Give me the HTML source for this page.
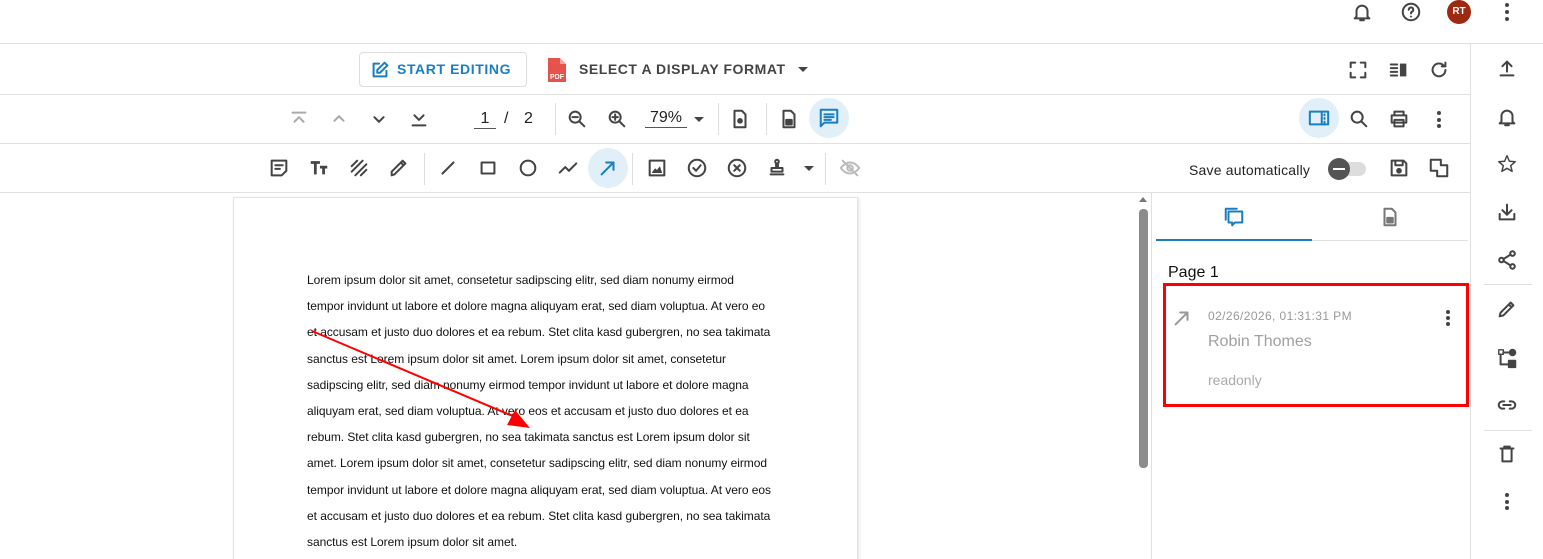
<!DOCTYPE html>
<html><head><meta charset="utf-8"><style>
*{margin:0;padding:0;box-sizing:border-box}
html,body{width:1543px;height:559px;overflow:hidden}
body{background:#fff;font-family:"Liberation Sans",sans-serif;position:relative;color:#333}
.a{position:absolute}
.hl{position:absolute;height:1px;background:#e0e0e0}
svg.i{position:absolute;width:22px;height:22px;fill:none;stroke:#444;stroke-width:2.2;stroke-linecap:round;stroke-linejoin:round}
.doc{font-size:12px;color:#111;line-height:26.2px;letter-spacing:-0.05px}
</style></head><body>
<svg class="i" style="left:1351px;top:1px" viewBox="0 0 24 24"><path d="M6 17V11a6 6 0 0 1 12 0v6l2 2H4z M10 21h4"/></svg>
<svg class="i" style="left:1400px;top:1px" viewBox="0 0 24 24"><circle cx="12" cy="12" r="9"/><path d="M9.5 9.5a2.5 2.5 0 1 1 3.5 2.3c-.8.4-1 1-1 1.7M12 17v.1"/></svg>
<div class="a" style="left:1447px;top:0;width:24px;height:24px;border-radius:50%;background:#9b2a10;color:#fff;font-size:10px;font-weight:bold;line-height:24px;text-align:center">RT</div>
<div class="a" style="left:1505px;top:3px;width:4px;font-size:0"><div style="width:4px;height:4px;border-radius:2px;background:#444;margin-bottom:3px"></div><div style="width:4px;height:4px;border-radius:2px;background:#444;margin-bottom:3px"></div><div style="width:4px;height:4px;border-radius:2px;background:#444"></div></div>
<div class="hl" style="left:0;top:43px;width:1543px"></div>
<div class="a" style="left:1470px;top:44px;width:1px;height:515px;background:#e0e0e0"></div>
<div class="a" style="left:359px;top:52px;width:168px;height:35px;border:1px solid #ddd;border-radius:4px"></div>
<svg class="i" style="left:369px;top:59px;stroke:#1a7fc1" viewBox="0 0 24 24"><path d="M11 5H5v14h14v-6 M17 4l3 3-8 8H9v-3z"/></svg>
<div class="a" style="left:397px;top:61px;font-size:14px;font-weight:bold;color:#1a7fc1;letter-spacing:0.6px">START EDITING</div>
<svg class="a" style="left:546px;top:57px" width="22" height="26" viewBox="0 0 22 26"><path d="M2 1h12l6 6v18H2z" fill="#e5534b"/><path d="M14 1v6h6" fill="#f3a7a2"/><text x="4" y="22" font-size="7" fill="#fff" font-family="Liberation Sans" font-weight="bold">PDF</text></svg>
<div class="a" style="left:579px;top:61px;font-size:14px;font-weight:bold;color:#444;letter-spacing:0.55px">SELECT A DISPLAY FORMAT</div>
<div class="a" style="left:798px;top:67px;border:5px solid transparent;border-top-color:#444;border-bottom:0"></div>
<svg class="i" style="left:1347px;top:59px" viewBox="0 0 24 24"><path d="M4 9V4h5M15 4h5v5M20 15v5h-5M9 20H4v-5"/></svg>
<svg class="i" style="left:1388px;top:59px" viewBox="0 0 24 24"><path d="M3 6h7M3 10h7M3 14h7M3 18h7" /><rect x="13" y="5" width="7" height="14" fill="#444" stroke="none"/></svg>
<svg class="i" style="left:1428px;top:59px" viewBox="0 0 24 24"><path d="M19 12a7 7 0 1 1-2-5M19 4v4h-4"/></svg>
<div class="hl" style="left:0;top:94px;width:1470px"></div>
<svg class="i" style="left:288px;top:108px;stroke:#aaa" viewBox="0 0 24 24"><path d="M5 5h14M7 15l5-5 5 5"/></svg>
<svg class="i" style="left:328px;top:108px;stroke:#aaa" viewBox="0 0 24 24"><path d="M7 14l5-5 5 5"/></svg>
<svg class="i" style="left:368px;top:108px" viewBox="0 0 24 24"><path d="M7 10l5 5 5-5"/></svg>
<svg class="i" style="left:408px;top:108px" viewBox="0 0 24 24"><path d="M7 8l5 5 5-5M5 19h14"/></svg>
<div class="a" style="left:474px;top:110px;width:22px;border-bottom:1px solid #555;font-size:16px;text-align:center;color:#222">1</div>
<div class="a" style="left:504px;top:110px;font-size:16px;color:#222">/</div>
<div class="a" style="left:524px;top:110px;font-size:16px;color:#222">2</div>
<div class="a" style="left:555px;top:103px;width:1px;height:32px;background:#ddd"></div>
<svg class="i" style="left:566px;top:108px" viewBox="0 0 24 24"><circle cx="10" cy="10" r="6"/><path d="M15 15l5 5M7 10h6"/></svg>
<svg class="i" style="left:606px;top:108px" viewBox="0 0 24 24"><circle cx="10" cy="10" r="6"/><path d="M15 15l5 5M7 10h6M10 7v6"/></svg>
<div class="a" style="left:645px;top:109px;width:42px;border-bottom:1px solid #555;font-size:16px;color:#222;padding-left:5px">79%</div>
<div class="a" style="left:694px;top:117px;border:5px solid transparent;border-top-color:#444;border-bottom:0"></div>
<div class="a" style="left:718px;top:103px;width:1px;height:32px;background:#ddd"></div>
<svg class="i" style="left:729px;top:108px" viewBox="0 0 24 24"><path d="M6 3h8l4 4v14H6z"/><circle cx="12" cy="14" r="2" fill="#444"/></svg>
<div class="a" style="left:766px;top:103px;width:1px;height:32px;background:#ddd"></div>
<svg class="i" style="left:778px;top:108px" viewBox="0 0 24 24"><path d="M6 3h8l4 4v14H6z"/><rect x="9" y="13" width="6" height="5" fill="#444"/></svg>
<div class="a" style="left:809px;top:98px;width:40px;height:40px;border-radius:50%;background:#e1eff8"></div>
<svg class="i" style="left:818px;top:107px;stroke:#1a7fc1" viewBox="0 0 24 24"><path d="M3 3h18v14H7l-4 4z" /><path d="M7 8h10M7 11h10M7 14h7"/></svg>
<div class="a" style="left:1299px;top:98px;width:40px;height:40px;border-radius:50%;background:#e1eff8"></div>
<svg class="i" style="left:1308px;top:107px;stroke:#1a7fc1" viewBox="0 0 24 24"><rect x="2" y="5" width="20" height="14"/><path d="M15 5v14M18 8v1M18 12v1M18 16v1"/></svg>
<svg class="i" style="left:1348px;top:108px" viewBox="0 0 24 24"><circle cx="10" cy="10" r="6"/><path d="M15 15l5 5"/></svg>
<svg class="i" style="left:1388px;top:108px" viewBox="0 0 24 24"><path d="M7 8V4h10v4M4 8h16v8H4zM7 13h10v7H7z"/></svg>
<div class="a" style="left:1437px;top:111px;font-size:0"><div style="width:4px;height:4px;border-radius:2px;background:#444;margin-bottom:2.5px"></div><div style="width:4px;height:4px;border-radius:2px;background:#444;margin-bottom:2.5px"></div><div style="width:4px;height:4px;border-radius:2px;background:#444"></div></div>
<div class="hl" style="left:0;top:143px;width:1470px"></div>
<svg class="i" style="left:268px;top:157px" viewBox="0 0 24 24"><path d="M4 4h16v11l-5 5H4z M8 9h8M8 13h5"/></svg>
<svg class="i" style="left:308px;top:157px" viewBox="0 0 24 24"><path d="M3 6h10M8 6v13M13 11h8M17 11v8" stroke-width="3" stroke-linecap="butt"/></svg>
<svg class="i" style="left:348px;top:157px" viewBox="0 0 24 24"><path d="M4 10l6-6M4 16L16 4M8 20L20 8M14 20l6-6"/></svg>
<svg class="i" style="left:388px;top:157px" viewBox="0 0 24 24"><path d="M4 20l3-1 12-12-3-3L4 16z M14 6l3 3"/></svg>
<div class="a" style="left:424px;top:153px;width:1px;height:32px;background:#ddd"></div>
<svg class="i" style="left:437px;top:157px" viewBox="0 0 24 24"><path d="M6 18L18 6"/></svg>
<svg class="i" style="left:477px;top:157px" viewBox="0 0 24 24"><rect x="5" y="6" width="14" height="12"/></svg>
<svg class="i" style="left:517px;top:157px" viewBox="0 0 24 24"><circle cx="12" cy="12" r="8"/></svg>
<svg class="i" style="left:557px;top:157px" viewBox="0 0 24 24"><path d="M3 17l6-6 4 4 8-8"/></svg>
<div class="a" style="left:588px;top:148px;width:40px;height:40px;border-radius:50%;background:#e1eff8"></div>
<svg class="i" style="left:597px;top:157px;stroke:#1a7fc1" viewBox="0 0 24 24"><path d="M5 19L18 6M10 6h8v8"/></svg>
<div class="a" style="left:632px;top:153px;width:1px;height:32px;background:#ddd"></div>
<svg class="i" style="left:646px;top:157px" viewBox="0 0 24 24"><rect x="4" y="4" width="16" height="16"/><path d="M7 17l3-4 2 2 3-4 2 6z" fill="#444" stroke-width="1"/></svg>
<svg class="i" style="left:686px;top:157px" viewBox="0 0 24 24"><circle cx="12" cy="12" r="9"/><path d="M8 12l3 3 5-6"/></svg>
<svg class="i" style="left:726px;top:157px" viewBox="0 0 24 24"><circle cx="12" cy="12" r="9"/><path d="M9 9l6 6M15 9l-6 6"/></svg>
<svg class="i" style="left:766px;top:157px" viewBox="0 0 24 24"><circle cx="12" cy="5" r="2"/><path d="M11 7v5h2V7M6 12h12v4H6zM5 19h14"/></svg>
<div class="a" style="left:804px;top:166px;border:5px solid transparent;border-top-color:#444;border-bottom:0"></div>
<div class="a" style="left:825px;top:153px;width:1px;height:32px;background:#ddd"></div>
<svg class="i" style="left:839px;top:157px;stroke:#bbb" viewBox="0 0 24 24"><path d="M2 12s4-6 10-6 10 6 10 6-4 6-10 6S2 12 2 12z M4 4l16 16"/><circle cx="12" cy="12" r="3"/></svg>
<div class="a" style="left:1189px;top:162px;font-size:14px;color:#222;letter-spacing:0.2px">Save automatically</div>
<div class="a" style="left:1332px;top:162px;width:34px;height:14px;border-radius:7px;background:#ddd"></div>
<div class="a" style="left:1328px;top:158px;width:22px;height:22px;border-radius:50%;background:#555"></div>
<div class="a" style="left:1333px;top:168px;width:12px;height:2px;background:#fff"></div>
<svg class="i" style="left:1388px;top:157px" viewBox="0 0 24 24"><path d="M4 4h13l3 3v13H4z M8 4v5h8V4"/><circle cx="12" cy="15" r="2" fill="#444"/></svg>
<svg class="i" style="left:1428px;top:157px" viewBox="0 0 24 24"><path d="M3 3h11v6h7v12H10v-6H3z"/></svg>
<div class="hl" style="left:0;top:192px;width:1470px"></div>
<div class="a" style="left:233px;top:197px;width:625px;height:370px;border:1px solid #e4e4e4;box-shadow:1px 1px 3px rgba(0,0,0,.12);background:#fff"></div>
<div class="a doc" style="left:307px;top:267px;width:520px;white-space:nowrap">
Lorem ipsum dolor sit amet, consetetur sadipscing elitr, sed diam nonumy eirmod<br>
tempor invidunt ut labore et dolore magna aliquyam erat, sed diam voluptua. At vero eo<br>
et accusam et justo duo dolores et ea rebum. Stet clita kasd gubergren, no sea takimata<br>
sanctus est Lorem ipsum dolor sit amet. Lorem ipsum dolor sit amet, consetetur<br>
sadipscing elitr, sed diam nonumy eirmod tempor invidunt ut labore et dolore magna<br>
aliquyam erat, sed diam voluptua. At vero eos et accusam et justo duo dolores et ea<br>
rebum. Stet clita kasd gubergren, no sea takimata sanctus est Lorem ipsum dolor sit<br>
amet. Lorem ipsum dolor sit amet, consetetur sadipscing elitr, sed diam nonumy eirmod<br>
tempor invidunt ut labore et dolore magna aliquyam erat, sed diam voluptua. At vero eos<br>
et accusam et justo duo dolores et ea rebum. Stet clita kasd gubergren, no sea takimata<br>
sanctus est Lorem ipsum dolor sit amet.
</div>
<svg class="a" style="left:0;top:0" width="1543" height="559"><path d="M312 331L522 420" stroke="#f00" stroke-width="2"/><path d="M530 428L507 425L515 410z" fill="#f00"/></svg>
<div class="a" style="left:1139px;top:197px;border:4px solid transparent;border-bottom:5px solid #777;border-top:0"></div>
<div class="a" style="left:1139px;top:209px;width:9px;height:259px;border-radius:4px;background:#8c8c8c"></div>
<div class="a" style="left:1151px;top:193px;width:1px;height:366px;background:#e0e0e0"></div>
<svg class="i" style="left:1223px;top:206px;stroke:#1a7fc1" viewBox="0 0 24 24"><path d="M3 3h12 M3 3v12 M6 6h15v12h-8l-3 3v-3H6z"/></svg>
<svg class="i" style="left:1379px;top:206px;stroke:#777" viewBox="0 0 24 24"><path d="M6 3h8l4 4v14H6z"/><rect x="9" y="13" width="6" height="5" fill="#777"/></svg>
<div class="a" style="left:1156px;top:240px;width:312px;height:1px;background:#e0e0e0"></div>
<div class="a" style="left:1156px;top:239px;width:156px;height:2px;background:#1a7fc1"></div>
<div class="a" style="left:1168px;top:264px;font-size:16px;color:#111">Page 1</div>
<div class="a" style="left:1163px;top:283px;width:306px;height:124px;border:3px solid #f00"></div>
<svg class="i" style="left:1171px;top:307px;stroke:#999" viewBox="0 0 24 24"><path d="M5 19L18 6M10 6h8v8"/></svg>
<div class="a" style="left:1208px;top:309px;font-size:12px;color:#999;letter-spacing:.4px">02/26/2026, 01:31:31 PM</div>
<div class="a" style="left:1208px;top:333px;font-size:16px;color:#a0a0a0">Robin Thomes</div>
<div class="a" style="left:1208px;top:372px;font-size:14px;color:#aaa">readonly</div>
<div class="a" style="left:1446px;top:310px;font-size:0"><div style="width:4px;height:4px;border-radius:2px;background:#444;margin-bottom:2px"></div><div style="width:4px;height:4px;border-radius:2px;background:#444;margin-bottom:2px"></div><div style="width:4px;height:4px;border-radius:2px;background:#444"></div></div>
<svg class="i" style="left:1496px;top:57px" viewBox="0 0 24 24"><path d="M5 20h14M12 16V5M7 10l5-5 5 5"/></svg>
<svg class="i" style="left:1496px;top:106px" viewBox="0 0 24 24"><path d="M6 17V11a6 6 0 0 1 12 0v6l2 2H4z M10 21h4"/></svg>
<svg class="i" style="left:1496px;top:153px" viewBox="0 0 24 24"><path d="M12 3l2.6 6 6.4.5-5 4.3 1.6 6.2L12 16.7 6.4 20l1.6-6.2-5-4.3 6.4-.5z" stroke-width="1.6"/></svg>
<svg class="i" style="left:1496px;top:201px" viewBox="0 0 24 24"><path d="M4 14v6h16v-6M12 4v11M7 10l5 5 5-5"/></svg>
<svg class="i" style="left:1496px;top:249px" viewBox="0 0 24 24"><circle cx="18" cy="5" r="2.5"/><circle cx="6" cy="12" r="2.5"/><circle cx="18" cy="19" r="2.5"/><path d="M8 11l8-5M8 13l8 5"/></svg>
<div class="a" style="left:1484px;top:284px;width:48px;height:1px;background:#e0e0e0"></div>
<svg class="i" style="left:1496px;top:298px" viewBox="0 0 24 24"><path d="M4 20l1-4L16 5l3 3L8 19z M14 7l3 3"/></svg>
<svg class="i" style="left:1496px;top:347px" viewBox="0 0 24 24"><rect x="3" y="3" width="5" height="5" stroke-width="1.5"/><circle cx="18" cy="6" r="3" fill="#444"/><rect x="14" y="15" width="7" height="7" fill="#444"/><path d="M5 8v11h9M8 6h7"/></svg>
<svg class="i" style="left:1496px;top:394px" viewBox="0 0 24 24"><path d="M9 8H7a4 4 0 0 0 0 8h2M15 8h2a4 4 0 0 1 0 8h-2M8 12h8"/></svg>
<div class="a" style="left:1484px;top:430px;width:48px;height:1px;background:#e0e0e0"></div>
<svg class="i" style="left:1496px;top:443px" viewBox="0 0 24 24"><path d="M5 6h14M9 6V4h6v2M7 6v14h10V6"/></svg>
<div class="a" style="left:1505px;top:493px;font-size:0"><div style="width:4px;height:4px;border-radius:2px;background:#444;margin-bottom:2.5px"></div><div style="width:4px;height:4px;border-radius:2px;background:#444;margin-bottom:2.5px"></div><div style="width:4px;height:4px;border-radius:2px;background:#444"></div></div>
</body></html>
